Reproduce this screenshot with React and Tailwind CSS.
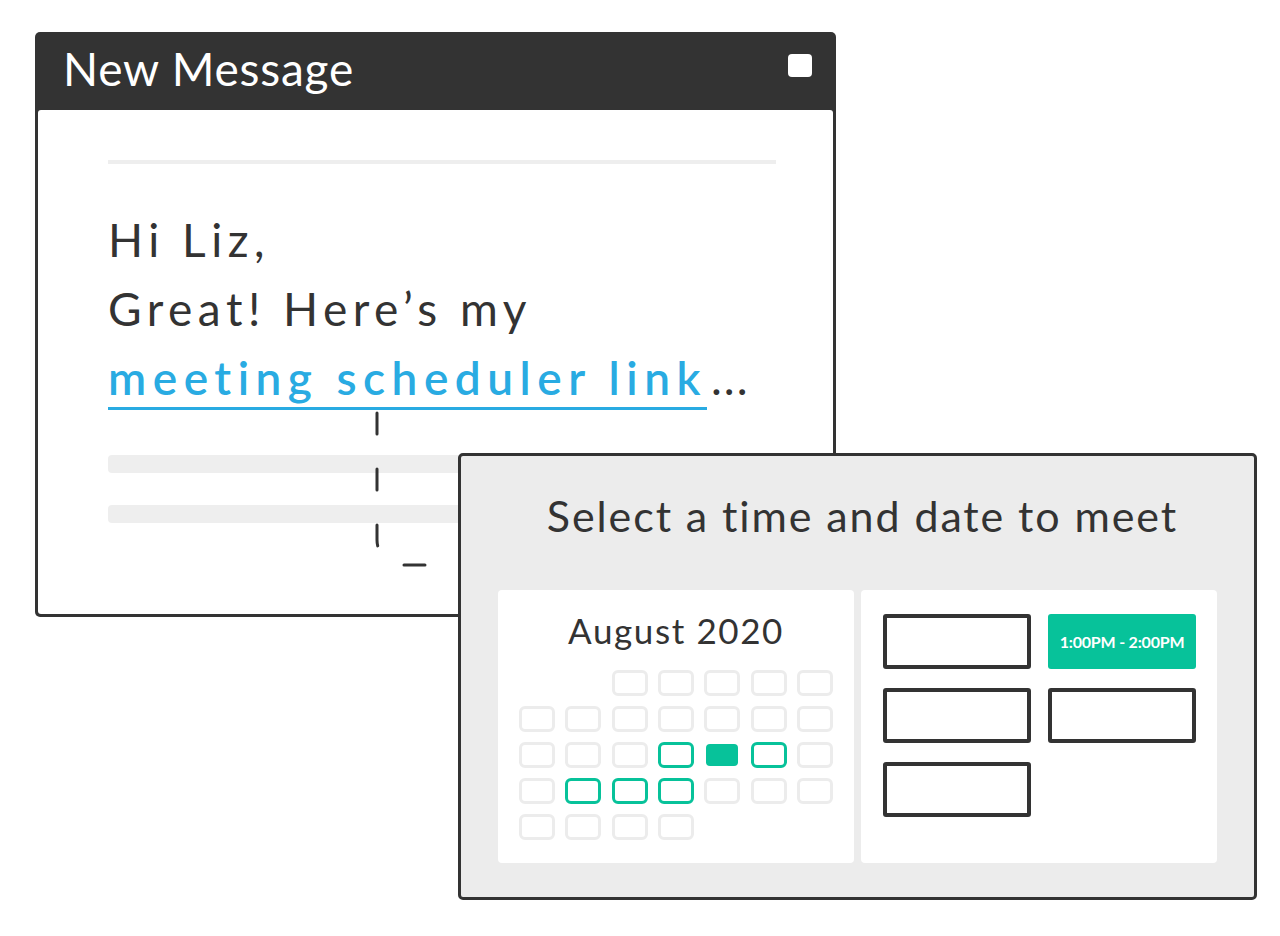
import React from "react";

const GREEN = "bg-[#07c29a]";

// calendar layout: 0 = empty slot, 1 = gray day, 2 = green outline, 3 = green filled
const calendarRows = [
  [0, 0, 1, 1, 1, 1, 1],
  [1, 1, 1, 1, 1, 1, 1],
  [1, 1, 1, 2, 3, 2, 1],
  [1, 2, 2, 2, 1, 1, 1],
  [1, 1, 1, 1, 0, 0, 0],
];

const DayCell = ({ kind }) => {
  if (kind === 0) return <div className="w-[36px] h-[26px]" />;
  if (kind === 3)
    return (
      <div className="w-[36px] h-[26px] p-[2px]">
        <div className={`w-full h-full rounded-[4px] ${GREEN}`} />
      </div>
    );
  if (kind === 2)
    return <div className="w-[36px] h-[26px] rounded-[6px] border-[3px] border-[#07c29a]" />;
  return <div className="w-[36px] h-[26px] rounded-[6px] border-[3px] border-[#ececec]" />;
};

const Slot = ({ active }) =>
  active ? (
    <div className={`w-[148px] h-[55px] rounded-[3px] ${GREEN} flex items-center justify-center text-white text-[16px] font-bold tracking-[-0.2px]`}>
      1:00PM - 2:00PM
    </div>
  ) : (
    <div className="w-[148px] h-[55px] rounded-[3px] border-[4px] border-[#333333]" />
  );

const App = () => {
  return (
    <div className="relative w-[1280px] h-[936px] bg-white overflow-hidden font-['Lato',sans-serif] text-[#333333]">
      {/* message window */}
      <div className="pt-[32px] pl-[35px]">
        <div className="w-[801px] h-[585px] rounded-[5px] bg-[#333333] px-[3px] pb-[3px] flex flex-col">
          <div className="h-[78px] shrink-0 flex items-start justify-between pl-[25px] pr-[21px]">
            <span className="pt-[14px] text-white text-[46px] leading-none tracking-[0.8px]">New Message</span>
            <div className="mt-[22px] w-[24px] h-[23px] rounded-[4px] bg-white" />
          </div>
          <div className="flex-1 bg-white rounded-[3px] pl-[70px] pr-[57px]">
            <div className="mt-[50px] h-[4px] bg-[#eeeeee]" />
            <div className="mt-[41px] text-[46px] leading-[69px] tracking-[5.5px]">
              <div>Hi Liz,</div>
              <div>Great! Here’s my</div>
              <div className="whitespace-nowrap">
                <span className="text-[#29abe2] font-semibold tracking-[6.5px] underline decoration-[3px] underline-offset-[12px]">
                  meeting scheduler link
                </span>
                <span className="ml-[4px] tracking-[2px]">...</span>
              </div>
            </div>
            <div className="mt-[43px] h-[18px] rounded-[4px] bg-[#eeeeee]" />
            <div className="mt-[32px] h-[18px] rounded-[4px] bg-[#eeeeee]" />
          </div>
        </div>
      </div>

      {/* dashed connector */}
      <svg className="absolute left-0 top-0 pointer-events-none" width="1280" height="936">
        <path
          d="M377 413 V540 A25 25 0 0 0 402 565 H470"
          fill="none"
          stroke="#333333"
          strokeWidth="3"
          strokeLinecap="round"
          strokeDasharray="21 35"
        />
      </svg>

      {/* scheduler overlay */}
      <div className="absolute left-[458px] top-[453px] w-[799px] h-[447px] rounded-[5px] border-[3px] border-[#333333] bg-[#ececec] px-[37px] pb-[34px] flex flex-col">
        <div className="h-[134px] shrink-0 pl-[10px] flex items-start justify-center">
          <span className="pt-[38px] text-[43px] leading-none tracking-[1.9px]">Select a time and date to meet</span>
        </div>
        <div className="flex-1 flex gap-[7px]">
          <div className="w-[357px] bg-white rounded-[4px] px-[21px] flex flex-col">
            <div className="pt-[23px] h-[80px] text-center text-[35px] leading-none tracking-[1.6px]">August 2020</div>
            <div className="grid grid-cols-7 gap-x-[10.5px] gap-y-[10px]">
              {calendarRows.flat().map((k, i) => (
                <DayCell key={i} kind={k} />
              ))}
            </div>
          </div>
          <div className="w-[357px] bg-white rounded-[4px] pl-[22px] pt-[24px]">
            <div className="grid grid-cols-[148px_148px] gap-x-[17px] gap-y-[19px]">
              <Slot />
              <Slot active />
              <Slot />
              <Slot />
              <Slot />
            </div>
          </div>
        </div>
      </div>
    </div>
  );
};

export default App;
